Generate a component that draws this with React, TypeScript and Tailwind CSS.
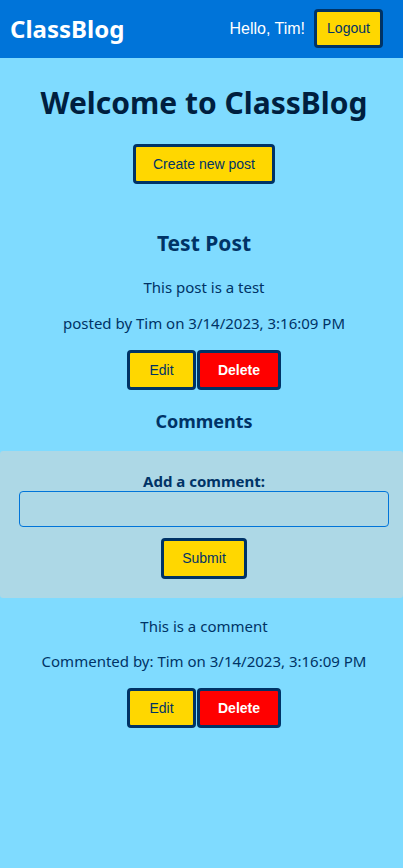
const btn =
  "border-[3px] border-[#003366] rounded-[4px] font-['Liberation_Sans',Arial,sans-serif] text-[14px]"

export default function App() {
  return (
    <div className="min-h-[868px] bg-[#7fdbff] font-['Noto_Sans',sans-serif] text-[#003366]">
      {/* Header */}
      <header className="h-[58px] bg-[#0074d9] flex items-center justify-between pl-[10px] pr-[20px]">
        <span className="text-white font-bold text-[24px] leading-none">ClassBlog</span>
        <div className="flex items-center gap-[9px]">
          <span className="text-white text-[16px] font-['Liberation_Sans',Arial,sans-serif]">Hello, Tim!</span>
          <button className={`${btn} bg-[#ffd700] w-[69px] h-[39px] mt-[-2px]`}>Logout</button>
        </div>
      </header>

      <main className="flex flex-col items-center text-center">
        <div className="flex flex-col items-center pl-[5px]">
          <h1 className="mt-[26px] text-[30px] font-bold text-[#001f3f] leading-[38px]">Welcome to ClassBlog</h1>
          <button className={`${btn} bg-[#ffd700] w-[142px] h-[40px] mt-[22px]`}>Create new post</button>

          <h2 className="mt-[44px] text-[21px] font-bold leading-[30px]">Test Post</h2>
          <p className="mt-[19px] text-[15px] leading-[20px]">This post is a test</p>
          <p className="mt-[16px] text-[15px] leading-[20px]">posted by Tim on 3/14/2023, 3:16:09 PM</p>
          <div className="mt-[17px] flex gap-px">
            <button className={`${btn} bg-[#ffd700] w-[69px] h-[40px]`}>Edit</button>
            <button className={`${btn} bg-[#ff0000] text-white font-bold w-[84px] h-[40px]`}>Delete</button>
          </div>
          <h3 className="mt-[19px] text-[18px] font-bold leading-[24px]">Comments</h3>
        </div>

        <form className="mt-[18px] w-full bg-[#add8e6] rounded-[3px] flex flex-col items-center pl-[19px] pr-[14px] pt-[21px] pb-[19px]">
          <label className="text-[15px] font-bold leading-[18px]">Add a comment:</label>
          <input className="mt-[1px] w-full h-[36px] border border-[#0074d9] rounded-[4px] bg-transparent" />
          <button type="button" className={`${btn} bg-[#ffd700] w-[86px] h-[41px] mt-[11px]`}>Submit</button>
        </form>

        <div className="flex flex-col items-center pl-[5px]">
          <p className="mt-[18px] text-[15px] leading-[20px]">This is a comment</p>
          <p className="mt-[15px] text-[15px] leading-[20px]">Commented by: Tim on 3/14/2023, 3:16:09 PM</p>
          <div className="mt-[17px] flex gap-px">
            <button className={`${btn} bg-[#ffd700] w-[69px] h-[40px]`}>Edit</button>
            <button className={`${btn} bg-[#ff0000] text-white font-bold w-[84px] h-[40px]`}>Delete</button>
          </div>
        </div>
      </main>
    </div>
  )
}
